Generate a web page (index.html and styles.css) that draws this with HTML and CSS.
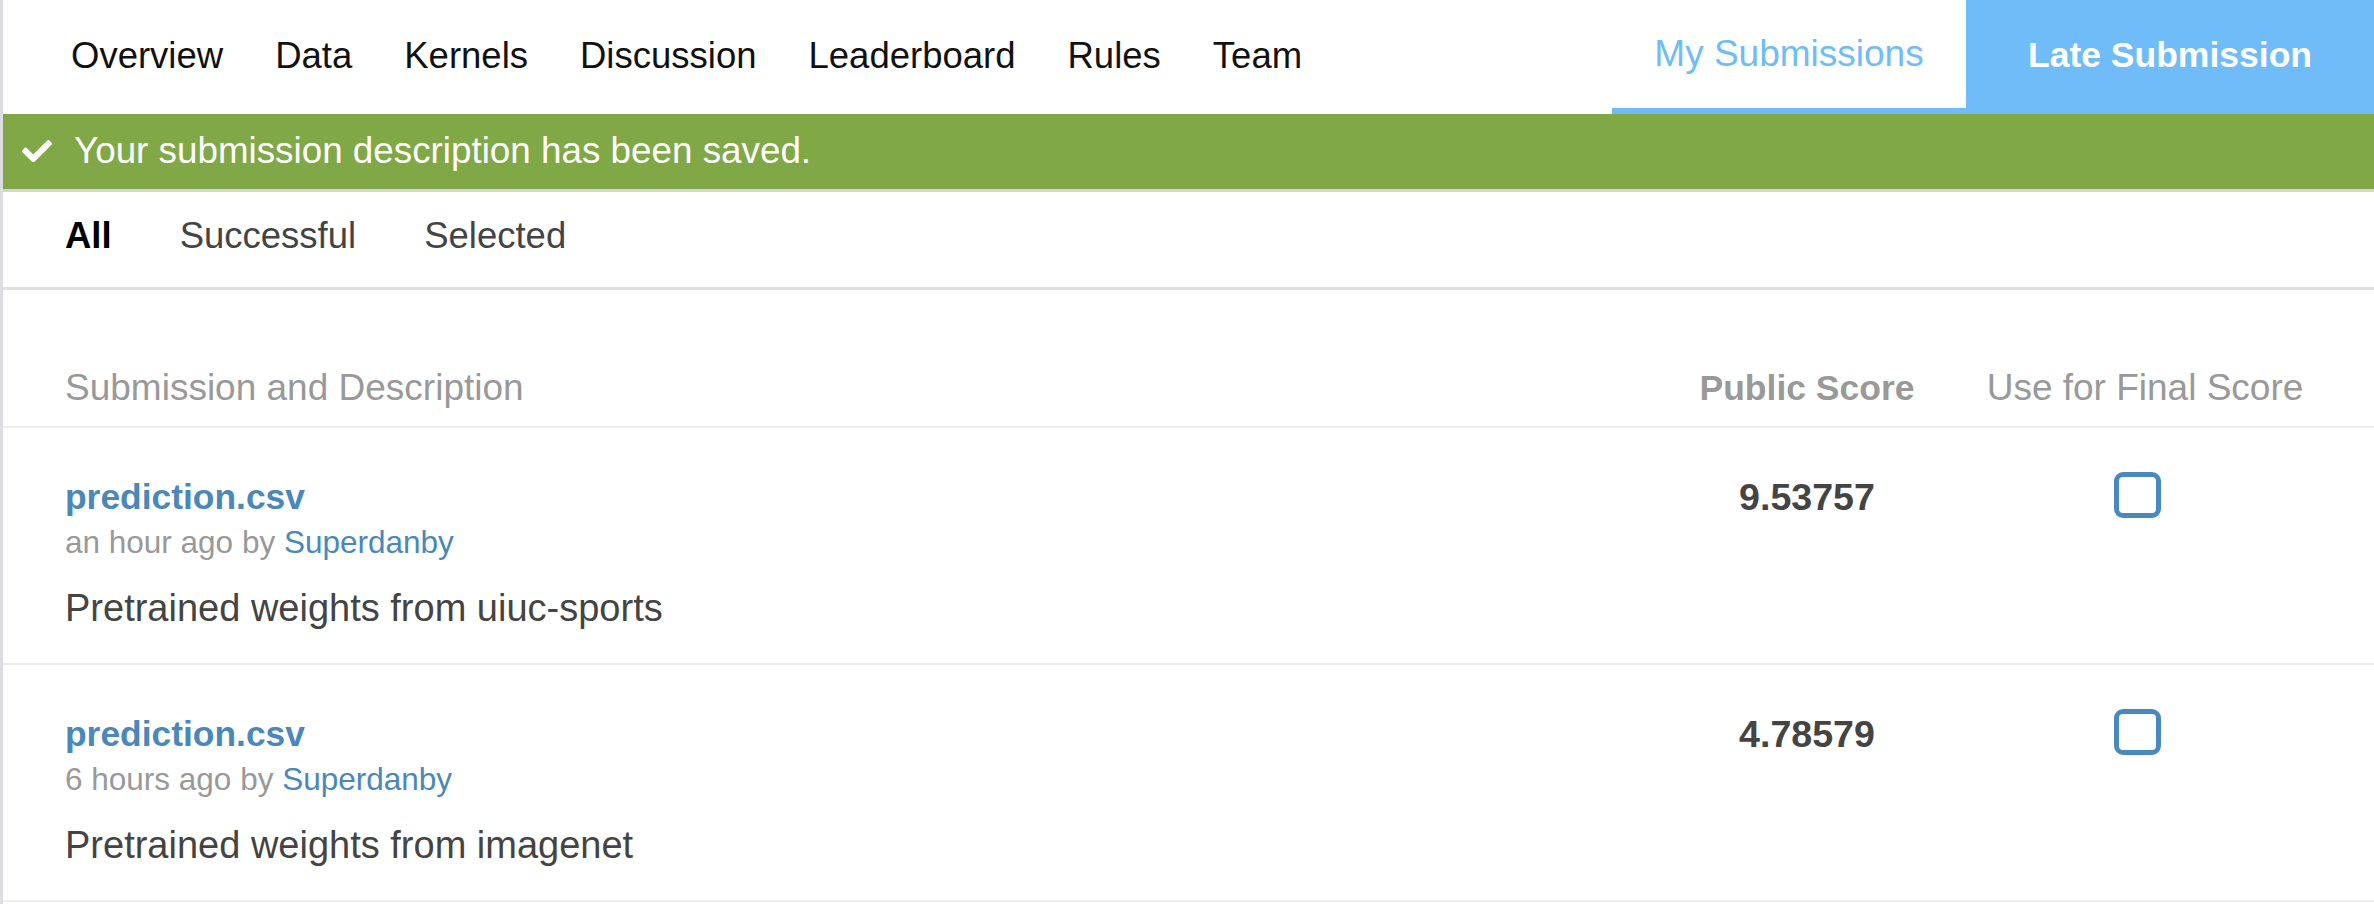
FILE: index.html
```html
<!DOCTYPE html>
<html lang="en">
<head>
<meta charset="utf-8">
<title>My Submissions</title>
<link rel="stylesheet" href="styles.css">
</head>
<body>
<div class="page">
  <header class="topnav">
    <nav class="main-tabs">
      <a class="main-tab">Overview</a>
      <a class="main-tab">Data</a>
      <a class="main-tab">Kernels</a>
      <a class="main-tab">Discussion</a>
      <a class="main-tab">Leaderboard</a>
      <a class="main-tab">Rules</a>
      <a class="main-tab">Team</a>
    </nav>
    <div class="actions">
      <a class="my-subs">My Submissions</a>
      <a class="late-sub">Late Submission</a>
    </div>
  </header>

  <div class="alert">
    <svg class="alert-icon" viewBox="0 64 512 384" aria-hidden="true"><path fill="#fff" d="M173.898 439.404l-166.4-166.4c-9.997-9.997-9.997-26.206 0-36.204l36.203-36.204c9.997-9.998 26.207-9.998 36.204 0L192 312.69 432.095 72.596c9.997-9.997 26.207-9.997 36.204 0l36.203 36.204c9.997 9.997 9.997 26.206 0 36.204l-294.4 294.401c-9.998 9.997-26.207 9.997-36.204-.001z"/></svg>
    <span class="alert-text">Your submission description has been saved.</span>
  </div>

  <div class="sub-tabs">
    <a class="sub-tab active">All</a>
    <a class="sub-tab">Successful</a>
    <a class="sub-tab">Selected</a>
  </div>

  <div class="table">
    <div class="grid thead">
      <div class="th">Submission and Description</div>
      <div class="th th-score">Public Score</div>
      <div class="th th-final">Use for Final Score</div>
    </div>

    <div class="grid trow">
      <div class="cell-main">
        <a class="sub-title">prediction.csv</a>
        <div class="sub-meta">an hour ago by <a class="user">Superdanby</a></div>
        <div class="sub-desc">Pretrained weights from uiuc-sports</div>
      </div>
      <div class="score">9.53757</div>
      <div class="final"><span class="checkbox"></span></div>
    </div>

    <div class="grid trow">
      <div class="cell-main">
        <a class="sub-title">prediction.csv</a>
        <div class="sub-meta">6 hours ago by <a class="user">Superdanby</a></div>
        <div class="sub-desc">Pretrained weights from imagenet</div>
      </div>
      <div class="score">4.78579</div>
      <div class="final"><span class="checkbox"></span></div>
    </div>
  </div>
</div>
</body>
</html>
```

FILE: styles.css
```css
* { box-sizing: border-box; }

html, body {
  margin: 0;
  padding: 0;
  background: #fff;
  font-family: "Liberation Sans", Arial, sans-serif;
}

a { text-decoration: none; cursor: pointer; }

.page {
  border-left: 3px solid #dcdde1;
  min-height: 904px;
}

/* top navigation */
.topnav {
  display: flex;
  justify-content: space-between;
  height: 114px;
}

.main-tabs {
  display: flex;
  align-items: center;
  gap: 52px;
  padding-left: 68px;
  padding-bottom: 3px;
}

.main-tab {
  font-size: 36.5px;
  line-height: 42px;
  color: #111;
}

.actions {
  display: flex;
}

.my-subs {
  width: 354px;
  display: flex;
  align-items: center;
  justify-content: center;
  font-size: 37px;
  color: #6fbcf9;
  border-bottom: 6px solid #6fbcf9;
}

.late-sub {
  width: 408px;
  display: flex;
  align-items: center;
  justify-content: center;
  padding-bottom: 3px;
  background: #70bcf8;
  color: #fff;
  font-weight: 700;
  font-size: 35.5px;
}

/* alert */
.alert {
  height: 78px;
  display: flex;
  align-items: center;
  gap: 22px;
  padding: 0 0 1px 19px;
  background: #80a846;
  border-bottom: 3px solid #d4d5d7;
}

.alert-icon {
  width: 30px;
  height: 22.5px;
  flex: none;
}

.alert-text {
  font-size: 36.8px;
  color: #fff;
}

/* sub tabs */
.sub-tabs {
  display: flex;
  gap: 68px;
  padding: 23px 0 30px 62px;
  border-bottom: 3px solid #dfe0e3;
}

.sub-tab {
  font-size: 36.5px;
  line-height: 42px;
  color: #444;
}

.sub-tab.active {
  color: #000;
  font-weight: 700;
}

/* table */
.grid {
  display: grid;
  grid-template-columns: 1fr 314px 362px;
  padding-left: 62px;
  padding-right: 48px;
  border-bottom: 2px solid #ececec;
}

.thead {
  padding-top: 76px;
  padding-bottom: 16px;
}

.th {
  font-size: 37px;
  line-height: 44px;
  color: #999;
}

.th-score {
  text-align: center;
  font-weight: 700;
  font-size: 35.5px;
}

.th-final {
  text-align: center;
}

.trow {
  padding-top: 47px;
  padding-bottom: 32px;
}

.cell-main {
  display: flex;
  flex-direction: column;
  align-items: flex-start;
}

.sub-title {
  font-size: 35.4px;
  line-height: 44px;
  font-weight: 700;
  color: #4a87bb;
}

.sub-meta {
  margin-top: 3px;
  font-size: 31.5px;
  line-height: 40px;
  color: #999;
}

.user {
  color: #4a87bb;
}

.sub-desc {
  margin-top: 23px;
  font-size: 38px;
  line-height: 46px;
  color: #444;
}

.score {
  text-align: center;
  font-size: 37.6px;
  line-height: 44px;
  font-weight: 700;
  color: #444;
}

.final {
  display: flex;
  justify-content: center;
  align-items: flex-start;
}

.checkbox {
  display: block;
  width: 47px;
  height: 46px;
  margin-top: -3px;
  margin-right: 16px;
  border: 5px solid #4a89bf;
  border-radius: 9px;
  background: #fff;
}
```
